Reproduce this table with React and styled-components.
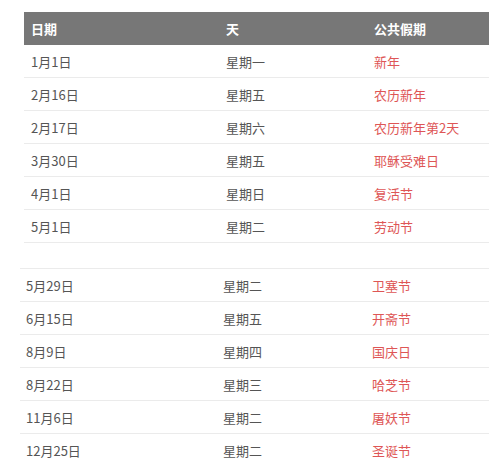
import React from "react";
import styled, { createGlobalStyle } from "styled-components";

const Global = createGlobalStyle`
	body {
		margin: 0;
		background: #fff;
		overflow: hidden;
		font-family: "Noto Sans CJK SC", "Noto Sans", sans-serif;
	}
`

const Page = styled.div`
	width: 489px;
	padding-top: 12px;
`
const Table = styled.div`
	margin-left: ${p => p.$left}px;
	margin-top: ${p => p.$top || 0}px;
	border-top: ${p => p.$topLine ? "1px solid #ebebeb" : "none"};
`
const Head = styled.div`
	display: grid;
	grid-template-columns: ${p => p.$cols};
	height: 33px;
	align-items: center;
	background: #777;
	color: #fff;
	font-weight: 700;
	font-size: 13px;
`
const Row = styled.div`
	display: grid;
	grid-template-columns: ${p => p.$cols};
	height: 32px;
	align-items: center;
	font-size: 13px;
	color: #555;
	border-bottom: ${p => p.$last ? "none" : "1px solid #ebebeb"};
`
const Cell = styled.div`
	padding-left: ${p => p.$pad}px;
	white-space: nowrap;
`
const Holiday = styled(Cell)`
	color: #de5656;
`

const first = [
	["1月1日", "星期一", "新年"],
	["2月16日", "星期五", "农历新年"],
	["2月17日", "星期六", "农历新年第2天"],
	["3月30日", "星期五", "耶稣受难日"],
	["4月1日", "星期日", "复活节"],
	["5月1日", "星期二", "劳动节"],
]

const second = [
	["5月29日", "星期二", "卫塞节"],
	["6月15日", "星期五", "开斋节"],
	["8月9日", "星期四", "国庆日"],
	["8月22日", "星期三", "哈芝节"],
	["11月6日", "星期二", "屠妖节"],
	["12月25日", "星期二", "圣诞节"],
]

const cols1 = "195px 148px 1fr"
const cols2 = "197px 149px 1fr"

export default function App() {
	return (
		<Page>
			<Global />
			<Table $left={24}>
				<Head $cols={cols1}>
					<Cell $pad={7}>日期</Cell>
					<Cell $pad={7}>天</Cell>
					<Cell $pad={7}>公共假期</Cell>
				</Head>
				{first.map(r => (
					<Row key={r[0]} $cols={cols1}>
						<Cell $pad={7}>{r[0]}</Cell>
						<Cell $pad={7}>{r[1]}</Cell>
						<Holiday $pad={7}>{r[2]}</Holiday>
					</Row>
				))}
			</Table>
			<Table $left={20} $top={25} $topLine>
				{second.map((r, i) => (
					<Row key={r[0]} $cols={cols2} $last={i === second.length - 1}>
						<Cell $pad={6}>{r[0]}</Cell>
						<Cell $pad={6}>{r[1]}</Cell>
						<Holiday $pad={6}>{r[2]}</Holiday>
					</Row>
				))}
			</Table>
		</Page>
	)
}
